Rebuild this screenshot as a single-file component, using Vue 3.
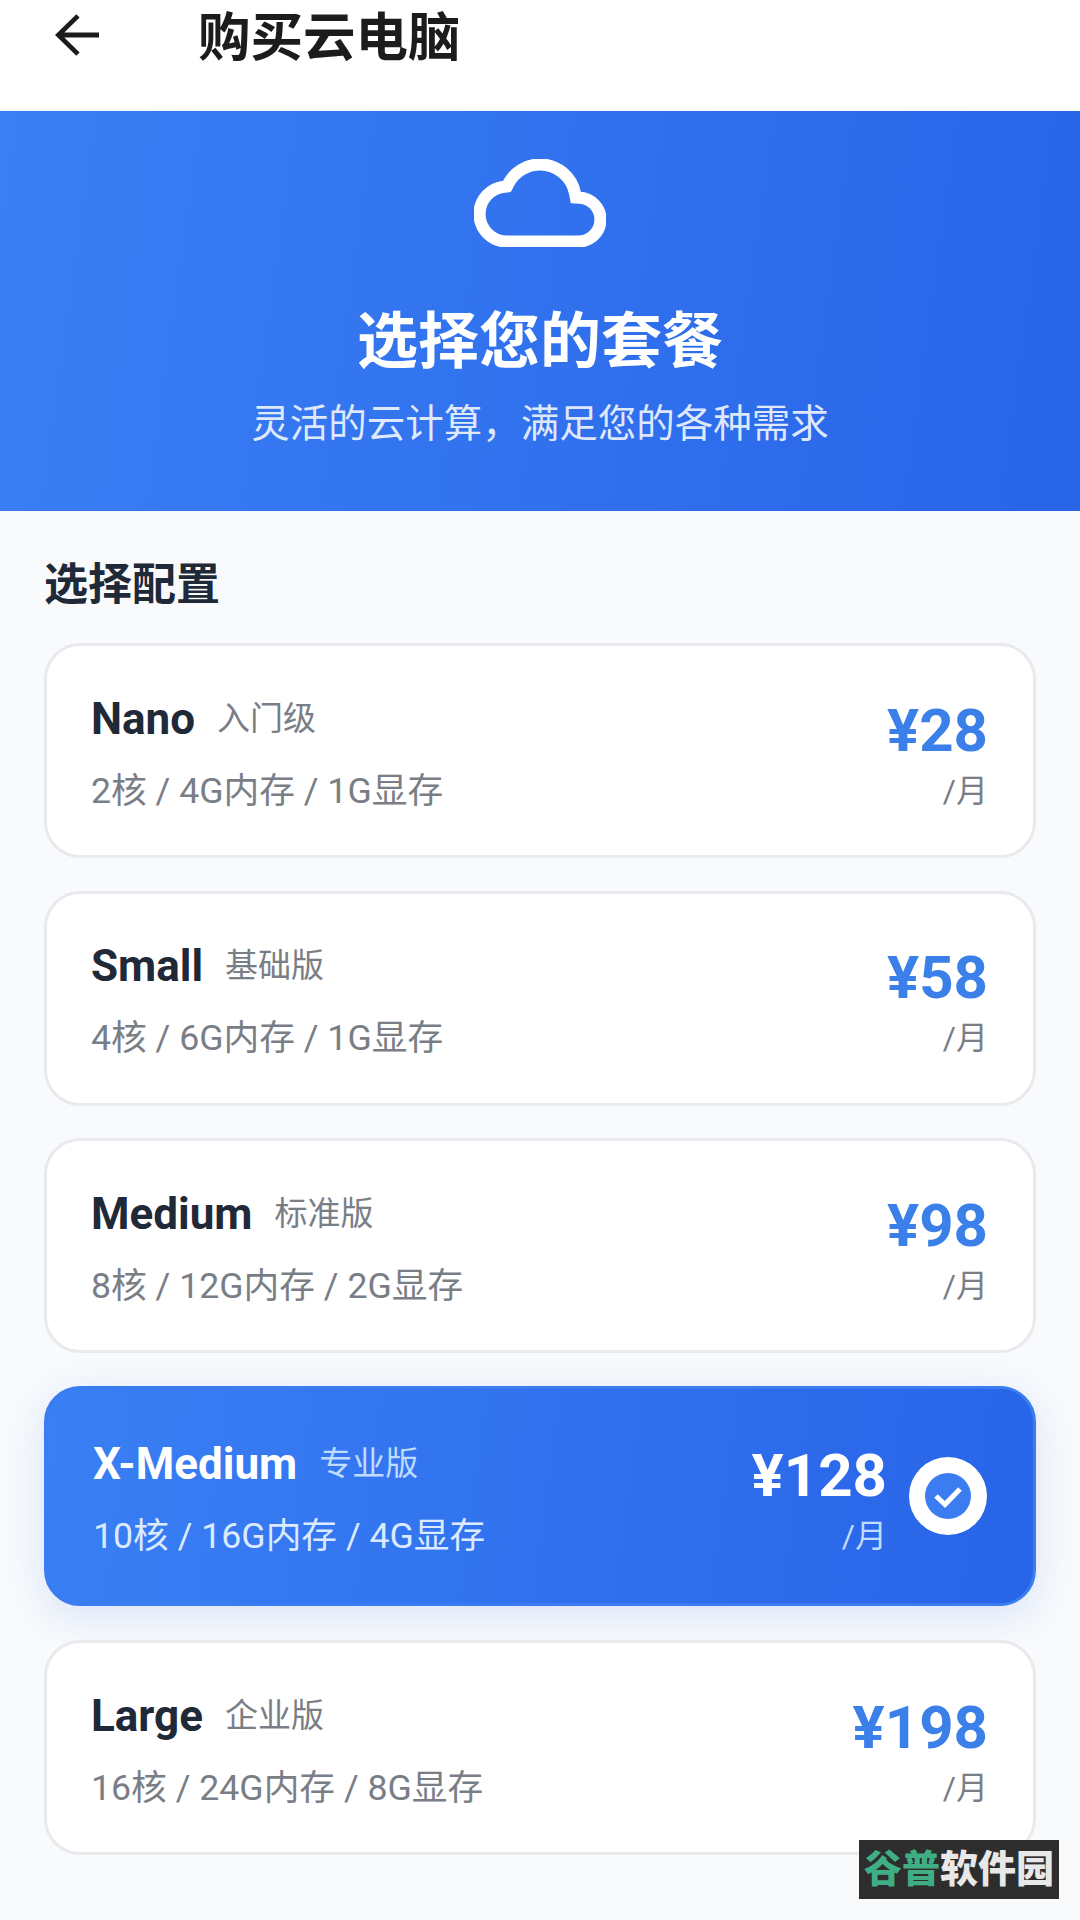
<template>
  <div class="page">
    <header class="topbar">
      <svg class="back" viewBox="0 0 46 44" fill="none" stroke="#1c1c1c" stroke-width="5">
        <path d="M46 22H4M24 2 3.5 22 24 42" />
      </svg>
      <h1>购买云电脑</h1>
    </header>

    <section class="hero">
      <svg class="cloud" viewBox="0 4 24 16" fill="#fff" stroke="#fff" stroke-width="0.2">
        <path d="M19.35 10.04C18.67 6.59 15.64 4 12 4 9.11 4 6.6 5.64 5.35 8.04 2.34 8.36 0 10.91 0 14c0 3.31 2.69 6 6 6h13c2.76 0 5-2.24 5-5 0-2.64-2.05-4.78-4.65-4.96zM19 18H6c-2.21 0-4-1.79-4-4 0-2.05 1.53-3.76 3.56-3.97l1.07-.11.5-.95C8.08 7.14 9.94 6 12 6c2.62 0 4.88 1.86 5.39 4.43l.3 1.5 1.53.11c1.56.1 2.78 1.41 2.78 2.96 0 1.65-1.35 3-3 3z" />
      </svg>
      <h2>选择您的套餐</h2>
      <p>灵活的云计算，满足您的各种需求</p>
    </section>

    <main class="content">
      <h3>选择配置</h3>
      <div class="plans">
        <div v-for="p in plans" :key="p.name" class="plan" :class="{ active: p.active }">
          <div class="info">
            <div class="title">
              <span class="name">{{ p.name }}</span>
              <span class="tag">{{ p.tag }}</span>
            </div>
            <div class="spec">{{ p.spec }}</div>
          </div>
          <div class="price">
            <div class="amount">¥{{ p.price }}</div>
            <div class="unit">/月</div>
          </div>
          <svg v-if="p.active" class="tick" viewBox="0 0 78 78">
            <circle cx="39" cy="39" r="39" fill="#fff" />
            <circle cx="39" cy="39" r="23" fill="#3b7cf0" />
            <path d="M27 39 36 47.5 51 32" fill="none" stroke="#fff" stroke-width="5" />
          </svg>
        </div>
      </div>
    </main>

    <div class="watermark"><span class="green">谷普</span>软件园</div>
  </div>
</template>

<script setup>
const plans = [
  { name: 'Nano', tag: '入门级', spec: '2核 / 4G内存 / 1G显存', price: 28 },
  { name: 'Small', tag: '基础版', spec: '4核 / 6G内存 / 1G显存', price: 58 },
  { name: 'Medium', tag: '标准版', spec: '8核 / 12G内存 / 2G显存', price: 98 },
  { name: 'X-Medium', tag: '专业版', spec: '10核 / 16G内存 / 4G显存', price: 128, active: true },
  { name: 'Large', tag: '企业版', spec: '16核 / 24G内存 / 8G显存', price: 198 }
]
</script>

<style>
body { background: #f8fafc; }
</style>

<style scoped>
.page { position: relative; width: 1080px; height: 1920px; overflow: hidden; background: #f8fafc; font-family: Roboto, "Noto Sans CJK SC", sans-serif; }
.topbar { height: 111px; background: #fff; display: flex; align-items: flex-start; padding-left: 55px; box-sizing: border-box; }
.back { width: 44px; height: 44px; margin-top: 13px; flex: none; }
.topbar h1 { margin: 0 0 0 99px; font-size: 52.5px; line-height: 76px; font-weight: 700; color: #1c1c1c; }
.hero { height: 400px; box-sizing: border-box; padding-top: 48px; background: linear-gradient(98deg, #3a7ff4, #2864e8); color: #fff; display: flex; flex-direction: column; align-items: center; }
.cloud { width: 132px; height: 88px; flex: none; }
.hero h2 { margin: 55px 0 0; font-size: 61px; line-height: 80px; font-weight: 700; }
.hero p { margin: 15px 0 0; font-size: 38.5px; line-height: 54px; color: rgba(255, 255, 255, 0.85); }
.content { padding: 0 44px; }
.content h3 { margin: 0; padding-top: 46px; font-size: 44px; line-height: 56px; font-weight: 700; color: #1f2937; }
.plans { margin-top: 30px; display: flex; flex-direction: column; gap: 32.5px; }
.plan { height: 215px; box-sizing: border-box; padding: 0 45px 0 44px; display: flex; align-items: center; background: #fff; border: 3px solid #e8eaed; border-radius: 36px; }
.plan.active { height: 220px; margin-bottom: 2px; padding: 0 46px; background: linear-gradient(98deg, #3a7ff4, #2864e8); border-color: #3b7cf0; box-shadow: 0 10px 40px rgba(37, 99, 235, 0.15); }
.info { flex: 1; margin-top: 4px; }
.title { display: flex; align-items: center; }
.name { font-size: 44px; line-height: 56px; font-weight: 700; color: #1f2937; }
.tag { margin: 0 0 0 22px; font-size: 33px; line-height: 50px; color: #797e86; }
.spec { margin-top: 20px; font-size: 35.7px; line-height: 48px; color: #797e86; }
.price { margin-top: 6px; text-align: right; }
.amount { font-size: 60px; line-height: 72px; font-weight: 700; color: #3b7fe8; }
.unit { margin-top: 2px; font-size: 32px; line-height: 44px; color: #797e86; }
.active .name, .active .amount { color: #fff; }
.active .tag, .active .unit { color: #bfdbfe; }
.active .spec { color: #dbeafe; }
.active .price { margin-right: 22px; }
.tick { width: 78px; height: 78px; flex: none; }
.watermark { position: absolute; left: 859px; top: 1840px; width: 200px; height: 59px; background: #2d2d2d; color: #e8e8e8; font-size: 38px; line-height: 59px; font-weight: 900; text-align: center; }
.green { color: #3fae84; }
</style>
